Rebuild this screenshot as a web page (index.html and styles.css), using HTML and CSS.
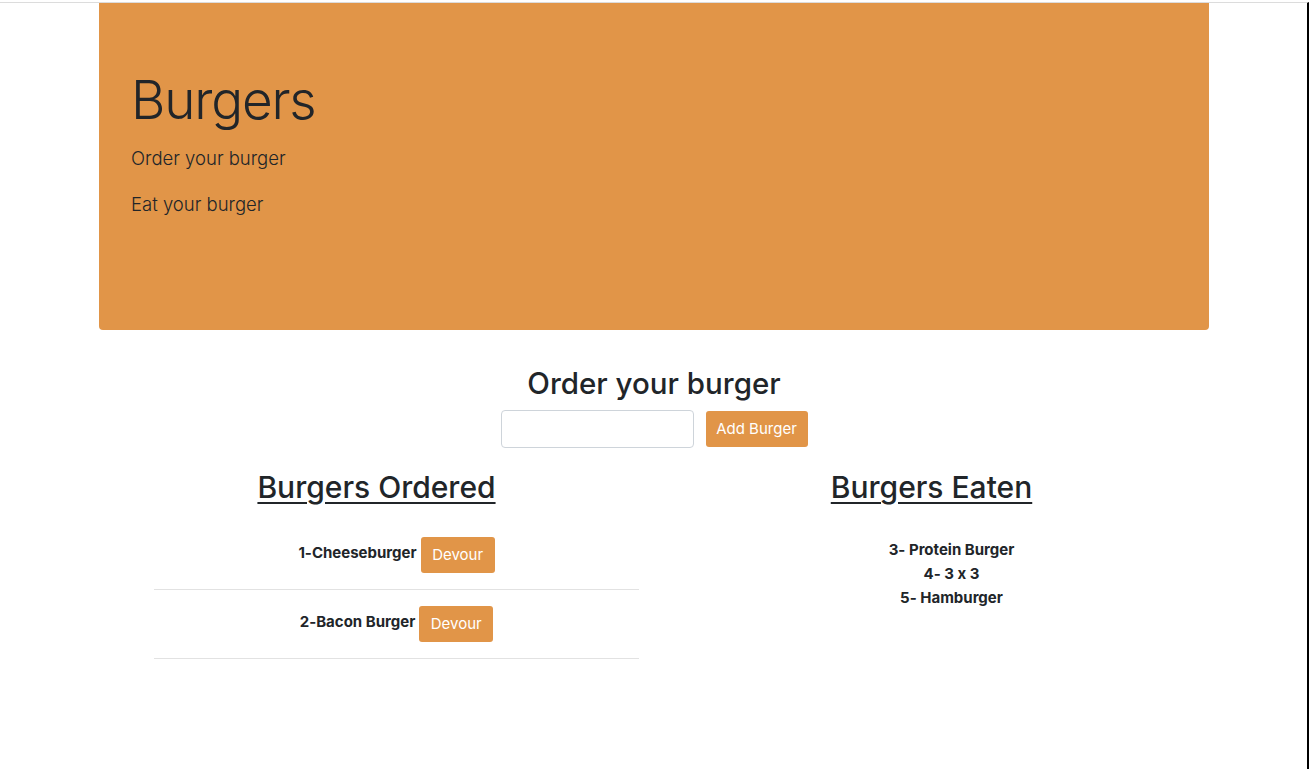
FILE: index.html
```html
<!DOCTYPE html>
<html lang="en">
<head>
<meta charset="utf-8">
<title>Burgers</title>
<link rel="stylesheet" href="styles.css">
</head>
<body>
<div class="frame">
  <div class="container">
    <header class="jumbotron">
      <h1 class="display">Burgers</h1>
      <p class="lead">Order your burger</p>
      <p class="lead">Eat your burger</p>
    </header>

    <section class="order">
      <h3 class="order-title">Order your burger</h3>
      <form class="order-form">
        <input class="form-input" type="text" aria-label="Burger name">
        <button type="button" class="btn btn-add">Add Burger</button>
      </form>
    </section>

    <div class="row">
      <div class="col">
        <h2 class="col-title">Burgers Ordered</h2>
        <ul class="ordered-list">
          <li class="ordered-item"><span class="burger-name">1-Cheeseburger</span><button type="button" class="btn btn-devour">Devour</button></li>
          <li class="ordered-item"><span class="burger-name">2-Bacon Burger</span><button type="button" class="btn btn-devour">Devour</button></li>
        </ul>
      </div>
      <div class="col">
        <h2 class="col-title">Burgers Eaten</h2>
        <ul class="eaten-list">
          <li class="eaten-item">3- Protein Burger</li>
          <li class="eaten-item">4- 3 x 3</li>
          <li class="eaten-item">5- Hamburger</li>
        </ul>
      </div>
    </div>
  </div>
</div>
</body>
</html>
```

FILE: styles.css
```css
* { box-sizing: border-box; }

html, body {
  margin: 0;
  padding: 0;
  height: 100%;
  background: #fff;
}

body {
  font-family: "Inter", "Liberation Sans", sans-serif;
  font-feature-settings: "calt" 0;
  color: #212529;
  padding-top: 2px;
}

.frame {
  height: 767px;
  border-top: 1px solid #dcdcdc;
  border-right: 2px solid #000;
}

.container {
  width: 1110px;
  margin-left: 99px;
}

.jumbotron {
  background: #e19548;
  border-radius: 0 0 4px 4px;
  height: 327px;
  padding: 64px 32px;
}

.display {
  margin: 0 0 8px;
  font-size: 53px;
  font-weight: 300;
  line-height: 67px;
  letter-spacing: -1.2px;
}

.lead {
  margin: 0 0 16px;
  font-size: 18.5px;
  font-weight: 300;
  line-height: 30px;
  position: relative;
  top: 1px;
}

.order {
  text-align: center;
  padding-top: 36px;
}

.order-title {
  margin: 0 0 10px;
  font-size: 29.5px;
  font-weight: 500;
  line-height: 34px;
}

.order-form {
  display: flex;
  justify-content: center;
  align-items: center;
  gap: 12px;
  margin: 0;
}

.form-input {
  width: 193px;
  height: 38px;
  border: 1px solid #ced4da;
  border-radius: 4px;
  padding: 6px 12px;
  font: inherit;
}

.btn {
  font-family: inherit;
  background: #e19548;
  color: #fff;
  border: none;
  border-radius: 3px;
  font-size: 15px;
  font-weight: 400;
  line-height: 20px;
  cursor: pointer;
}

.btn-add {
  width: 102px;
  height: 36px;
  padding: 0;
}

.row {
  display: flex;
  margin-top: 19px;
}

.col {
  flex: 1 1 50%;
  padding: 0 15px;
  text-align: center;
}

.col-title {
  margin: 0;
  font-size: 30px;
  font-weight: 500;
  line-height: 40px;
  text-decoration: underline;
  text-decoration-thickness: 2px;
  text-underline-offset: 4px;
}

.ordered-list,
.eaten-list {
  list-style: none;
  margin: 0;
  padding: 0 0 0 40px;
}

.ordered-list {
  margin-top: 14px;
}

.ordered-item {
  display: flex;
  justify-content: center;
  align-items: center;
  gap: 4px;
  height: 69px;
  border-bottom: 1px solid #e2e2e2;
  font-size: 15px;
  font-weight: 700;
  line-height: 20px;
}

.burger-name {
  position: relative;
  top: -2px;
}

.btn-devour {
  height: 36px;
  width: 74px;
  padding: 0;
}

.eaten-list {
  margin-top: 31px;
}

.eaten-item {
  font-size: 15px;
  font-weight: 700;
  line-height: 24px;
}
```
